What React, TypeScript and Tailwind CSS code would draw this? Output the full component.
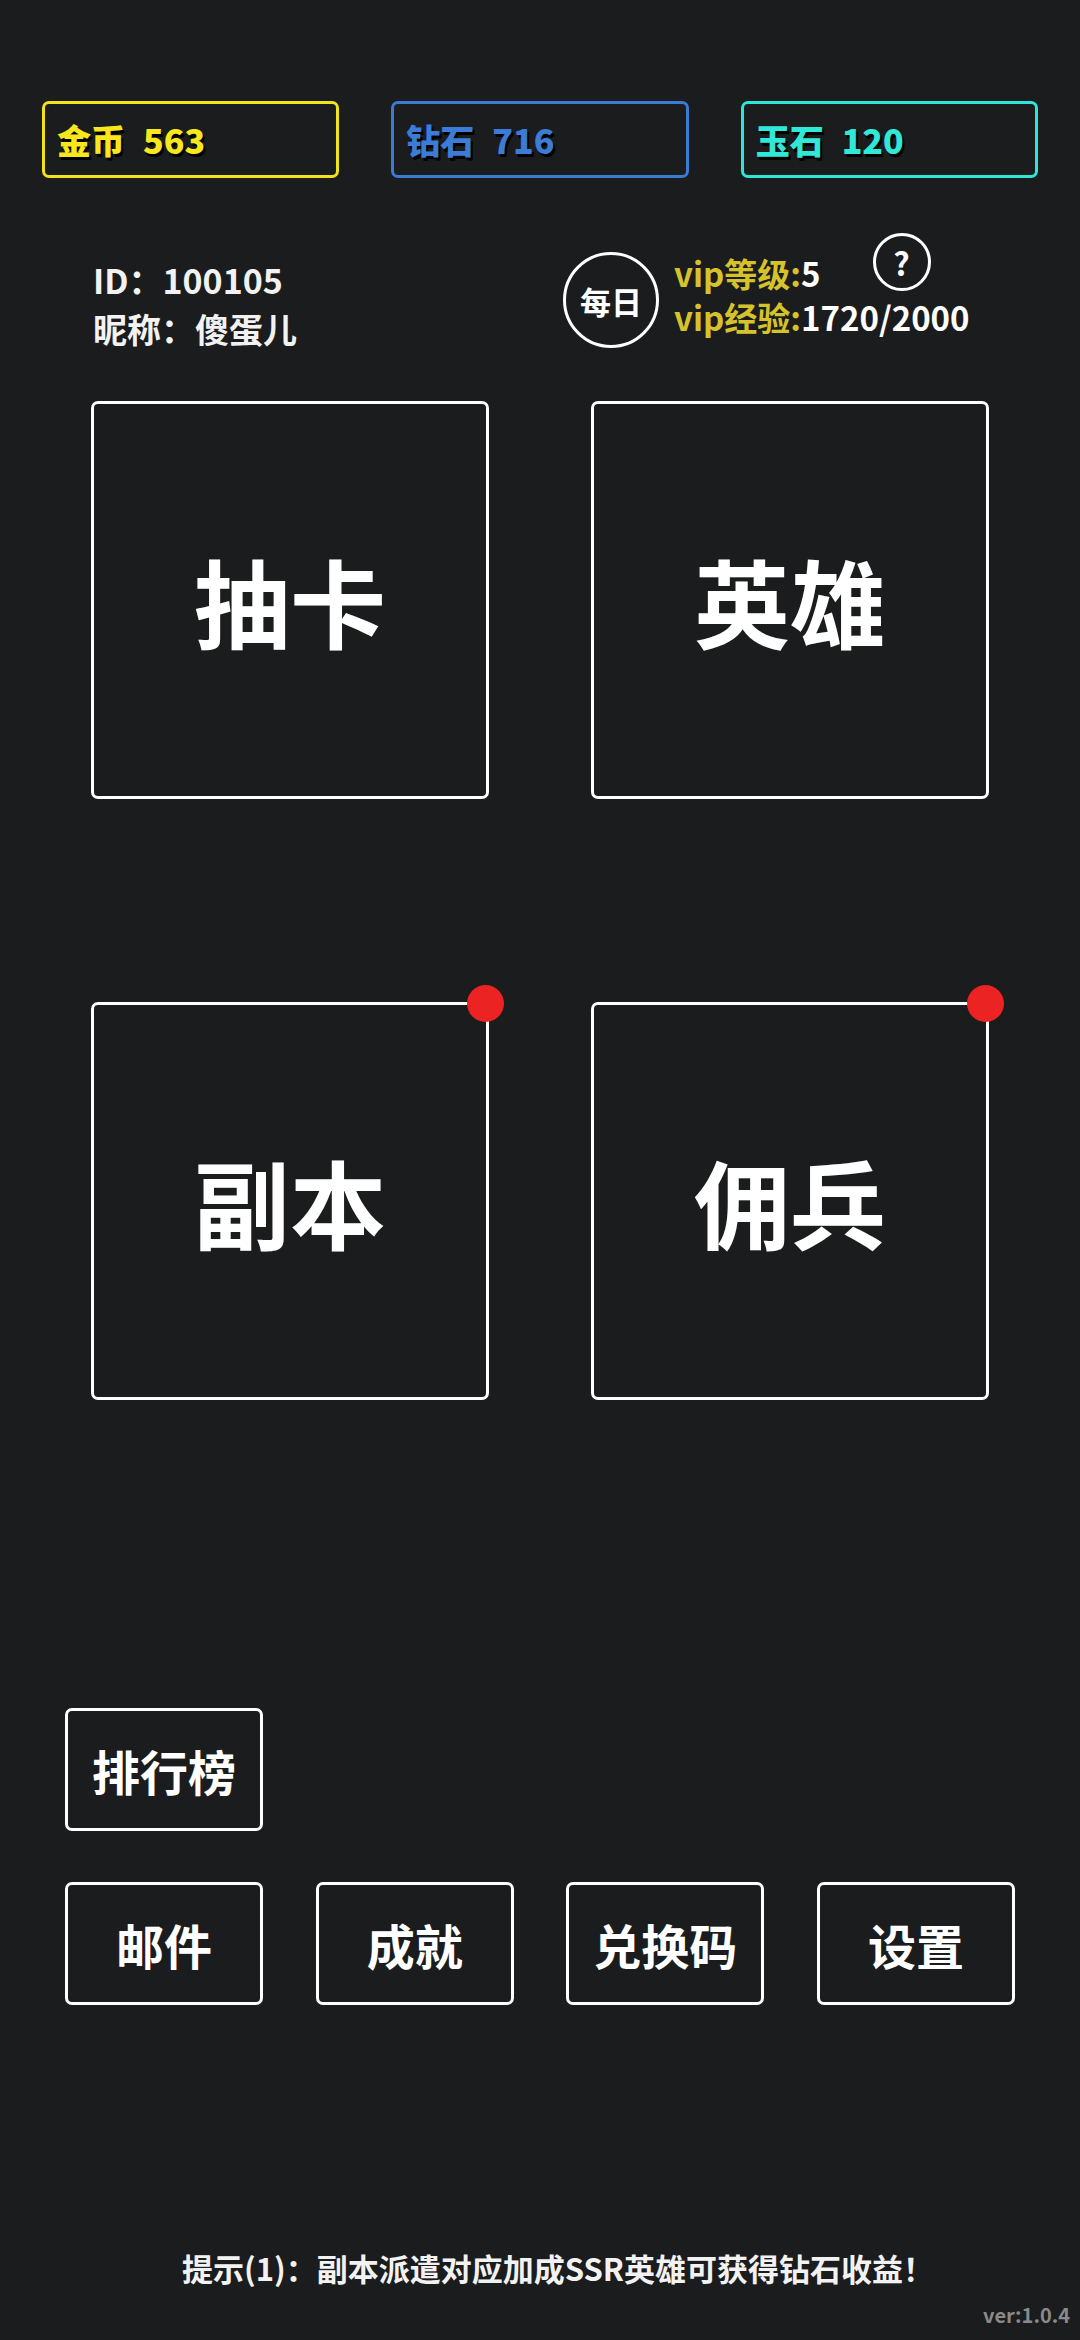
import React from 'react';

const currencies = [
  { label: '金币', value: '563', box: 'border-[#f2e21a]', text: 'text-[#f7e71c]' },
  { label: '钻石', value: '716', box: 'border-[#3a7bd3]', text: 'text-[#3b7dd6]' },
  { label: '玉石', value: '120', box: 'border-[#2fe6d6]', text: 'text-[#30e8d8]' },
];

const mainCards = [
  { label: '抽卡', dot: false },
  { label: '英雄', dot: false },
  { label: '副本', dot: true },
  { label: '佣兵', dot: true },
];

const menuButtons = ['邮件', '成就', '兑换码', '设置'];

function SmallButton({ label }: { label: string }) {
  return (
    <button className="w-[198px] h-[123px] border-[3px] border-white rounded-[7px] flex items-center justify-center text-[48px] font-bold text-white leading-none">
      {label}
    </button>
  );
}

export default function App() {
  return (
    <div
      className="w-[1080px] h-[2340px] bg-[#1b1c1e] flex flex-col text-white"
      style={{ fontFamily: '"Noto Sans CJK SC", "Noto Sans", sans-serif' }}
    >
      {/* Currency bar */}
      <div className="grid grid-cols-3 gap-x-[52px] px-[42px] pt-[101px]">
        {currencies.map((c) => (
          <div key={c.label} className={`h-[77px] border-[3px] rounded-[7px] flex items-center pl-[12px] ${c.box}`}>
            <span className={`text-[34px] font-black leading-none [text-shadow:2px_3px_0_#000] ${c.text}`}>
              {c.label}
              <span className="ml-[18px]">{c.value}</span>
            </span>
          </div>
        ))}
      </div>

      {/* Player info */}
      <div className="flex items-start mt-[73px]">
        <div className="ml-[93px] w-[470px] mt-[4px] text-[34px] font-bold leading-[49px] text-[#f2f2f2]">
          <p>ID：100105</p>
          <p>昵称：傻蛋儿</p>
        </div>
        <div className="flex items-start">
          <button className="mt-[1px] w-[96px] h-[96px] rounded-full border-[3px] border-white flex items-center justify-center text-[31px] font-bold leading-none">
            每日
          </button>
          <div className="ml-[15px] text-[33px] font-bold leading-[44px] text-[#d6c32b]">
            <div className="flex items-center h-[44px]">
              <span>
                vip等级:<span className="text-white">5</span>
              </span>
              <div className="ml-[52px] -mt-[22px] w-[58px] h-[58px] rounded-full border-[3px] border-white flex items-center justify-center text-white text-[32px] leading-none">
                ?
              </div>
            </div>
            <div className="h-[44px]">
              vip经验:<span className="text-white">1720/2000</span>
            </div>
          </div>
        </div>
      </div>

      {/* Main cards */}
      <div className="grid grid-cols-2 gap-x-[102px] gap-y-[203px] px-[91px] mt-[48px]">
        {mainCards.map((card) => (
          <div
            key={card.label}
            className="relative h-[398px] border-[3px] border-white rounded-[7px] flex items-center justify-center"
          >
            <span className="text-[96px] font-bold leading-none">{card.label}</span>
            {card.dot && (
              <span className="absolute -top-[20px] -right-[18px] w-[37px] h-[37px] rounded-full bg-[#ec2323]" />
            )}
          </div>
        ))}
      </div>

      {/* Bottom menu */}
      <div className="px-[65px] mt-[308px]">
        <SmallButton label="排行榜" />
        <div className="flex justify-between mt-[51px]">
          {menuButtons.map((b) => (
            <SmallButton key={b} label={b} />
          ))}
        </div>
      </div>

      {/* Tip */}
      <p className="mt-[243px] pl-[36px] text-center text-[31px] font-bold leading-[40px] text-[#f2f2f2]">
        提示(1)：副本派遣对应加成SSR英雄可获得钻石收益！
      </p>
      <p className="mt-[15px] pr-[10px] text-right text-[20px] font-bold leading-[24px] text-[#8a8a8a]">ver:1.0.4</p>
    </div>
  );
}
